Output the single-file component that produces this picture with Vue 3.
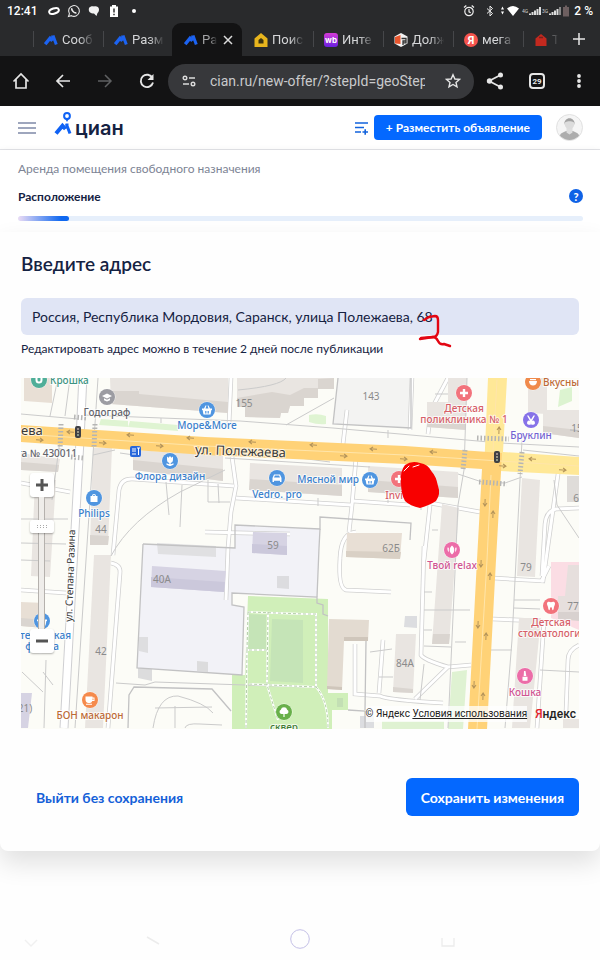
<script setup>
import { ref } from 'vue'

const address = ref('Россия, Республика Мордовия, Саранск, улица Полежаева, 68')
const zoom = ref(81)
const progress = 9

const tabs = [
  { id: 1, title: 'Сооб', icon: 'cian' },
  { id: 2, title: 'Разм', icon: 'cian' },
  { id: 3, title: 'Ра', icon: 'cian', active: true },
  { id: 4, title: 'Поис', icon: 'home' },
  { id: 5, title: 'Инте', icon: 'wb' },
  { id: 6, title: 'Долж', icon: 'cube' },
  { id: 7, title: 'мега', icon: 'ya' },
]

const shade = '#dad5d0'
const gray = '#e9e5e1'
const beige = '#e8dfd5'
const violet = '#d6d3e3'
const buildings = [
  { p: '24,378 52,378 52,403 24,401', f: beige },
  { p: '110,378 228,378 228,413 111,404', f: gray },
  { p: '111,391 139,391 139,394 228,402 228,413 111,404', f: shade },
  { p: '237,378 334,378 334,389 318,389 318,398 304,398 304,406 290,406 288,413 281,413 280,418 245,417 245,407 237,407', f: gray },
  { p: '237,398 272,392 290,395 304,388 318,388 318,379 334,378 334,389 318,389 318,398 304,398 304,406 290,406 288,413 281,413 280,418 245,417 245,407 237,407', f: shade },
  { p: '448,378 467,378 466,430 427,427 427,402 448,402', f: gray },
  { p: '427,418 466,421 466,430 427,427', f: shade },
  { p: '528,378 547,378 547,414 528,413', f: gray },
  { p: '543,410 579,410 579,438 543,433', f: gray },
  { p: '543,426 579,430 579,438 543,433', f: shade },
  { p: '21,453 60,459 58,472 21,470', f: gray },
  { p: '21,462 59,465 58,472 21,470', f: shade },
  { p: '93,448 112,448 108,545 90,545', f: gray },
  { p: '90,535 109,536 108,545 90,545', f: shade },
  { p: '94,555 111,555 103,728 85,728', f: gray },
  { p: '133,450 223,455 223,481 133,470', f: gray },
  { p: '133,460 223,469 223,481 133,470', f: shade },
  { p: '250,463 342,468 342,496 249,490', f: gray },
  { p: '250,479 342,485 342,496 249,490', f: shade },
  { p: '368,466 458,472 458,498 368,492', f: gray },
  { p: '368,480 458,487 458,498 368,492', f: shade },
  { p: '35,480 56,480 50,577 31,576', f: gray },
  { p: '21,602 45,603 44,628 21,626', f: beige },
  { p: '21,618 45,620 44,628 21,626', f: shade },
  { p: '21,693 32,693 28,728 21,728', f: violet },
  { p: '253,532 287,533 287,555 252,553', f: violet },
  { p: '252,544 287,546 287,555 252,553', f: '#cbc8db' },
  { p: '347,533 402,533 400,559 346,557', f: beige },
  { p: '346,551 401,552 400,559 346,557', f: '#d9d0c5' },
  { p: '152,566 226,571 224,592 151,587', f: violet },
  { p: '151,577 225,582 224,592 151,587', f: '#cbc8db' },
  { p: '157,543 216,546 216,557 158,554', f: '#e0e0e2' },
  { p: '139,637 148,637 148,653 139,651', f: '#dedee0' },
  { p: '138,668 152,669 152,681 138,678', f: '#dcdcdd' },
  { p: '197,661 208,662 208,672 197,671', f: '#dcdcdd' },
  { p: '277,576 289,576 289,589 277,588', f: '#dcdcdf' },
  { p: '405,616 417,616 417,628 404,627', f: '#dcdde0' },
  { p: '396,634 416,634 413,693 393,692', f: gray },
  { p: '393,687 413,689 413,693 393,692', f: shade },
  { p: '442,504 459,508 449,644 432,644', f: gray },
  { p: '433,634 450,634 449,644 432,644', f: shade },
  { p: '522,478 540,480 535,577 517,576', f: gray },
  { p: '567,476 579,476 579,502 567,502', f: '#dfdcd9' },
  { p: '519,618 541,618 530,728 512,728', f: gray },
  { p: '329,619 369,620 368,641 344,641 342,690 327,689', f: '#e3dbd1' },
  { p: '344,637 368,637 368,641 344,641', f: '#cfc6bb' },
  { p: '327,686 342,687 342,690 327,689', f: '#cfc6bb' },
  { p: '551,562 579,562 579,630 551,618', f: '#fbdde4' },
  { p: '568,565 579,565 579,612 558,612 558,596 565,596', f: '#e6dfdd' },
  { p: '558,612 579,612 579,621 558,619', f: '#d8d1cf' },
  { p: '337,698 343,698 343,707 337,707', f: '#c3dfb4' },
  { p: '360,716 374,716 374,728 360,728', f: '#dcdde0' },
  { p: '563,719 579,719 579,728 563,728', f: gray },
]

const lanes = [
  'M206 378 L205 378 M231 378 L229 424 M232 457 L236 486 L231 512 L228 548 L226 600',
  'M347 410 L343 444 M356 458 L352 505 L349 532',
  'M21 483 L70 492 M21 590 L66 593',
  'M111 563 Q121 565 120 573 L108 728',
  'M113 555 L119 490 Q121 478 133 479 L234 486',
  'M236 498 L351 505 M353 501 L410 505',
  'M205 532 L290 534',
  'M340 558 Q341 533 356 532 M340 558 Q338 588 346 590 L391 592',
  'M424 546 L421 655 Q424 660 448 667 L471 665 M448 667 L415 699',
  'M355 644 L355 694 L380 696 Q388 700 443 703 M383 640 L379 693',
  'M493 578 L543 581 L560 460 M493 619 L541 621',
  'M579 508 L556 509 Q546 511 545 524 L542 576',
  'M549 566 L541 582 M537 728 L544 620 M579 645 Q568 650 568 660 L566 712',
  'M428 434 L431 410 L448 378 M412 376 L410 430',
  'M430 503 L480 512 M430 505 L424 560',
]

const outlines = [
  'M338 378 L333 424 L411 428 L411 378',
  'M143 544 L137 668 L242 675 L244 607 L232 605 L232 593 L317 597 L317 603 L323 605 L323 614 L328 616',
  'M143 544 L235 548 L235 525 L320 529 L320 517 L411 523 L410 540',
  'M128 728 L129 695 L134 687 L212 689 L231 711',
  'M366 641 L365 710 M348 710 L365 711 L365 728 M570 430 L579 431',
  'M317 597 L319 548 L320 529',
]

const thin = [
  'M21 414 L78 419 M84 415 L240 421 L333 428 L500 443 L579 447',
  'M58 378 L50 416 M70 378 L65 416 M98 378 L92 470 L86 560 L75 728',
  'M60 440 L52 500 M21 519 L68 519 M21 543 L66 544',
  'M225 470 L180 492 Q130 520 111 556 M166 482 L169 515 M182 485 L180 527 M208 480 L208 502 L230 502 M218 484 L219 503',
  'M286 425 L334 398 M238 390 Q280 386 286 378',
  'M467 378 L464 470 L458 505 L448 728',
  'M522 440 L516 560 L512 640 L505 728',
  'M458 474 L482 482 L505 483 L522 477 M554 480 L557 505 L579 538 M523 450 L579 456',
  'M300 458 L330 462 M115 450 L93 455 M120 453 L134 455 M225 458 L370 467',
  'M116 683 L145 685 L155 682 L245 685 L305 687',
  'M153 728 Q158 695 178 696 Q205 703 213 713 M175 706 L175 728 M155 708 L212 707',
  'M185 728 Q186 723 200 724 L222 725',
  'M22 672 L43 692 M43 672 L53 685 M46 660 L44 728 M21 560 L50 561',
  'M424 592 L432 592 M424 610 L470 610 M424 630 L432 630 M424 646 L451 647 M490 650 L512 650 M370 652 L392 649 M379 677 L393 677 M514 600 L540 600 M514 608 L540 609 M540 670 L579 672 M455 642 L466 642',
  'M318 498 L318 506 M388 498 L388 503 M421 500 L421 510 M430 480 L430 503 M438 530 L432 530 M435 394 L448 394',
  'M349 460 L349 455 M388 430 L388 438 M161 423 L161 418 M424 664 L420 700',
]

const paths = [
  'M248 612 L305 614 L316 614 L316 687 L270 685 L249 684',
  'M248 612 L247 650 L268 650 M268 612 L267 685 L278 720 M247 650 L246 728',
  'M316 687 Q328 700 328 728',
]

const crossings = [
  'M61 424 L60 450', 'M95 424 L94 448', 'M74 417 L86 418', 'M71 457 L83 458',
  'M477 438 L509 439', 'M479 482 L507 484', 'M465 450 L463 470', 'M522 452 L520 474',
]

const arrows = [
  [70, 432, 183], [40, 440, 3], [103, 443, 3], [130, 435, 183], [160, 446, 3], [190, 438, 183],
  [252, 442, 183], [313, 445, 183], [344, 456, 3], [373, 449, 183], [404, 459, 3], [433, 452, 183],
  [503, 466, 3], [532, 459, 183], [563, 470, 3], [499, 430, 272], [485, 503, 92], [493, 514, 272],
  [481, 564, 92], [490, 576, 272], [478, 625, 92], [486, 636, 272], [474, 685, 92], [483, 696, 272],
]

const pois = [
  { x: 39, y: 380, c: '#4fae98', g: 'drop' },
  { x: 107, y: 397, c: '#9c9ca2', g: 'cap' },
  { x: 207, y: 410, c: '#4f95e0', g: 'basket' },
  { x: 170, y: 461, c: '#4f95e0', g: 'tulip' },
  { x: 94, y: 498, c: '#4f95e0', g: 'bag' },
  { x: 277, y: 478, c: '#4f95e0', g: 'car' },
  { x: 370, y: 480, c: '#4f95e0', g: 'basket' },
  { x: 399, y: 479, c: '#f2737c', g: 'cross' },
  { x: 464, y: 393, c: '#f2737c', g: 'cross' },
  { x: 531, y: 420, c: '#8672e8', g: 'scissors' },
  { x: 533, y: 382, c: '#f08a4b', g: 'food' },
  { x: 452, y: 550, c: '#ec6da8', g: 'lotus' },
  { x: 551, y: 606, c: '#f2737c', g: 'tooth' },
  { x: 525, y: 676, c: '#ec6da8', g: 'polish' },
  { x: 90, y: 700, c: '#f58a4c', g: 'cup' },
  { x: 42, y: 621, c: '#4f95e0', g: 'basket' },
  { x: 284, y: 712, c: '#68b04a', g: 'tree' },
]

const glyphs = {
  drop: 'M-3.500 -3v3a3.500 3.500 0 0 0 7 0v-3h-2v3a1.500 1.500 0 0 1-3 0v-3z',
  cap: 'M-5 -1 L0 -3.500 L5 -1 L0 1.500z M-3 1.200v2L0 4.500L3 3.200v-2L0 2.700z',
  basket: 'M-5 -1.500h2l1.500-3h1l-1 3h3l-1-3h1l1.500 3h2v1.500h-.6l-.9 4.500h-7l-.9-4.500h-.6z M-2 1v2.500h.8V1z M-.4 1v2.500h.8V1z M1.200 1v2.500h.8V1z',
  tulip: 'M-3 -4.500l1.500 1.200L0 -5l1.500 1.700L3 -4.500v3.500a3 3 0 0 1-2.300 2.900v1.300l2.800-1v1.500L.5 5h-1l-3-1.300v-1.500l2.800 1v-1.300A3 3 0 0 1-3-1z',
  bag: 'M-3.500 -2h1.500a2 2 0 0 1 4 0h1.500v6h-7z M-1 -2h2a1 1 0 0 0-2 0z',
  car: 'M-4.500 0l1.500-3.500h6L4.500 0v4h-1.500v-1.200h-6v1.200h-1.500z M-3 -.5h6l-.9-2h-4.200z',
  cross: 'M-1.200 -4h2.400v2.800h2.800v2.400h-2.800v2.800h-2.400v-2.800h-2.800v-2.400h2.800z',
  scissors: 'M-4 -4.500h1.500L0 -.5l2.500-4h1.500L1 1a2 2 0 1 1-1 1.200A2 2 0 1 1-1 1z',
  food: 'M-4 -1h8c0 3-2 4.500-4 4.500S-4 2-4-1z M-3 -3h6v1.200h-6z',
  lotus: 'M-4.500 -2.500l1.300 .3v4.500C-4.300 1.200-4.700-.5-4.500-2.500z M4.500 -2.500l-1.300 .3v4.500C4.300 1.200 4.700-.5 4.500-2.500z M0 -4.500C3 -2 3 2 0 4.500 -3 2 -3 -2 0 -4.500z',
  tooth: 'M-4 -2.500c0-2.200 2.500-2 4-1.200 1.500-.8 4-1 4 1.200 0 2-1 2.500-1.200 4.500C2.600 4.500 1.200 5 1 2.500 .9.800-.9.800-1 2.500-1.200 5-2.600 4.500-2.800 2-3 0-4-.5-4-2.500z',
  polish: 'M-1 -5h1.500l.8 5h-2.600z M-2.500 .7h5v4h-5z',
  cup: 'M-4.500 -3.500h7v1h2v3.500h-2.200c-.5 1.300-1.300 2-2.300 2h-1.500c-1.800 0-3-1.500-3-3.500z M2.500 -1.500v1.500h1v-1.500z M-4 3.700h6v1h-6z',
  tree: 'M-.6 5v-3h-1.800a2.200 2.200 0 0 1-.8-4.200 3.300 3.300 0 0 1 6.400 0A2.200 2.200 0 0 1 2.400 2h-1.800v3z',
}

const labels = [
  { t: 'Крошка', x: 50, y: 384, c: 'green', a: 'start' },
  { t: 'Годограф', x: 107, y: 416, c: 'slate' },
  { t: 'Море&More', x: 207, y: 429, c: 'blue' },
  { t: 'Флора дизайн', x: 170, y: 480, c: 'blue' },
  { t: 'Philips', x: 94, y: 517, c: 'blue' },
  { t: 'Vedro. pro', x: 277, y: 498, c: 'blue' },
  { t: 'Мясной мир', x: 359, y: 483, c: 'blue', a: 'end' },
  { t: 'Invitro', x: 401, y: 499, c: 'red' },
  { t: 'Детская', x: 464, y: 412, c: 'red' },
  { t: 'поликлиника № 1', x: 464, y: 423, c: 'red' },
  { t: 'Бруклин', x: 531, y: 439, c: 'purple' },
  { t: 'Вкусны', x: 543, y: 386, c: 'orange', a: 'start' },
  { t: 'Твой relax', x: 452, y: 569, c: 'pink' },
  { t: 'Детская', x: 551, y: 626, c: 'red' },
  { t: 'стоматологи', x: 518, y: 637, c: 'red', a: 'start' },
  { t: 'Кошка', x: 525, y: 696, c: 'pink' },
  { t: 'БОН макарон', x: 90, y: 719, c: 'brown' },
  { t: 'теринская', x: 71, y: 639, c: 'blue', a: 'end' },
  { t: 'фирма', x: 42, y: 650, c: 'blue' },
  { t: 'сквер', x: 284, y: 731, c: 'park' },
  { t: 'та № 430011', x: 77, y: 457, c: 'slate', a: 'end' },
  { t: '155', x: 244, y: 407, c: 'num' },
  { t: '143', x: 371, y: 400, c: 'num' },
  { t: '15', x: 577, y: 432, c: 'num' },
  { t: '44', x: 101, y: 533, c: 'num' },
  { t: '59', x: 273, y: 549, c: 'num' },
  { t: '62Б', x: 391, y: 552, c: 'num' },
  { t: '40А', x: 162, y: 583, c: 'num' },
  { t: '42', x: 101, y: 655, c: 'num' },
  { t: '84А', x: 405, y: 667, c: 'num' },
  { t: '79', x: 526, y: 571, c: 'num' },
  { t: '77', x: 573, y: 610, c: 'num' },
  { t: '6', x: 576, y: 502, c: 'num' },
  { t: '21)', x: 25, y: 712, c: 'num' },
]
</script>

<template>
  <div class="page">
    <div class="statusbar">
      <div class="status-left">
        <span class="clock">12:41</span>
        <svg width="14" height="14" viewBox="0 0 14 14"><ellipse cx="7" cy="7" rx="5" ry="2.600" transform="rotate(-18 7 7)" fill="none" stroke="#fff" stroke-width="2" /></svg>
        <svg width="14" height="14" viewBox="0 0 14 14" fill="none" stroke="#e8e8e8"><path d="M1.500 12.500l.9-2.700a5.400 5.400 0 1 1 2 1.900z" stroke-width="1.100" /><path d="M4.800 4.300c-.6 2 2.400 5 4.600 4.600" stroke-width="1.700" /></svg>
        <svg width="14" height="14" viewBox="0 0 14 14" fill="#f1f1f1"><path d="M2 4C3 2 6 2 7 2.500c2-.5 5 0 5 3 0 2-.7 3-1.500 3.500L9.500 12 7 9.500C3.500 9.500 1 8 2 4z" /></svg>
        <svg width="14" height="14" viewBox="0 0 14 14"><path d="M5 1h4v1.500h2V13H3V2.500h2z" fill="#fff" /><path d="M7 4.500v4M7 9.700v1.500" stroke="#222" stroke-width="1.400" /></svg>
        <svg width="14" height="14" viewBox="0 0 14 14"><circle cx="7" cy="7" r="2" fill="#fff" /></svg>
      </div>
      <div class="status-right">
        <svg width="12" height="14" viewBox="0 0 12 14" fill="none" stroke="#eee" stroke-width="1.200"><circle cx="6" cy="7.500" r="4.200" /><path d="M6 5v2.800l1.700 1M1 3.500L3.300 1.500M11 3.500L8.700 1.500" /></svg>
        <svg class="bt" width="10" height="14" viewBox="0 0 10 14" fill="none" stroke="#eee"><path d="M2 4.500l5.500 5L5 12V2l2.500 2.500-5.500 5" /></svg>
        <svg class="wifi" width="19" height="14" viewBox="0 0 19 14" fill="#fff"><path d="M0 5.500l1.500-3 1.500 3zM0 7.500l1.500 3 1.500-3zM6 4.500Q12-.5 18 4.500L12 12z" /></svg>
        <svg width="20" height="14" viewBox="0 0 20 14"><text x="0" y="9" class="net">4G</text><path d="M8 11v-1.500M10.500 11V8M13 11V6.500M15.500 11V5M18 11V3" stroke="#ddd" stroke-width="2" /></svg>
        <svg width="20" height="14" viewBox="0 0 20 14"><text x="0" y="9" class="net">3G</text><path d="M8 11v-1.500M10.500 11V8M13 11V6.500M15.500 11V5" stroke="#ddd" stroke-width="2" /><path d="M18 11V3" stroke="#8a8a8a" stroke-width="2" /></svg>
        <svg class="cell" width="8" height="14" viewBox="0 0 8 14"><path d="M3 1.500h2V3h2v9.500H1V3h2z" fill="#6d5f60" /></svg>
        <span class="clock">2 %</span>
      </div>
    </div>

    <nav class="tabs" aria-label="Вкладки">
      <div class="tab-ghost"></div>
      <div v-for="tab in tabs" :key="tab.id" class="tab" :class="{ active: tab.active, plain: tab.id === 4 }">
        <svg v-if="tab.icon === 'cian'" width="14" height="14" viewBox="0 0 14 14" fill="none" stroke="#1c63f2"><path d="M1.200 11.200L6 5.200l2.500 2.600" stroke-width="3.400" /><path d="M9 2.500L12.300 11.500M8.700 2.500V7.500" stroke-width="3" /></svg>
        <svg v-else-if="tab.icon === 'home'" width="14" height="14" viewBox="0 0 14 14"><path d="M7 0l6.500 5.500V14H.5V5.500z" fill="#e8b51d" /><path d="M4.500 10.500V7L7 5l2.500 2v3.500z" fill="#3c3410" /></svg>
        <svg v-else-if="tab.icon === 'wb'" width="14" height="14" viewBox="0 0 14 14"><defs><linearGradient id="wbg" x1="0" y1="0" x2="0" y2="1"><stop offset="0" stop-color="#d43bd6" /><stop offset="1" stop-color="#6a1fe0" /></linearGradient></defs><rect width="14" height="14" rx="3" fill="url(#wbg)" /><text x="7" y="10" text-anchor="middle" class="fav-wb">wb</text></svg>
        <svg v-else-if="tab.icon === 'cube'" width="14" height="14" viewBox="0 0 14 14"><path d="M7 0l6.500 3.500v7L7 14 .5 10.500v-7z" fill="#f3f3f3" /><path d="M1 4l5.500-2v9L1 10.500z" fill="#e8552d" /><path d="M7.500 5.500h4.500v2.500H9v4M9 9.800h3V6" stroke="#333" stroke-width="1.300" fill="none" /></svg>
        <svg v-else width="14" height="14" viewBox="0 0 14 14"><circle cx="7" cy="7" r="7" fill="#f5544d" /><text x="7" y="11" text-anchor="middle" class="fav-ya">Я</text></svg>
        <span class="tab-title">{{ tab.title }}</span>
        <button v-if="tab.active" class="tab-close" aria-label="Закрыть"><svg width="12" height="12" viewBox="0 0 12 12" stroke="#dcdcdc" stroke-width="1.500"><path d="M2 2l8 8M10 2l-8 8" /></svg></button>
      </div>
      <div class="tab last">
        <svg width="14" height="14" viewBox="0 0 14 14"><path d="M7 1l5.500 4.500V13H1.500V5.500z" fill="#c3291f" /><path d="M5 4.500h4" stroke="#74231e" stroke-width="1.500" /></svg>
        <span class="tab-title">T</span>
      </div>
      <button class="tab-new" aria-label="Новая вкладка"><svg width="14" height="14" viewBox="0 0 14 14" stroke="#e6e6e6" stroke-width="1.500"><path d="M7 1v12M1 7h12" /></svg></button>
    </nav>

    <div class="toolbar">
      <button class="tool" aria-label="Домой"><svg width="18" height="18" viewBox="0 0 18 18" fill="none" stroke="#e6e6e6" stroke-width="1.700"><path d="M1.500 9.500L9 2l7.500 7.500M4 7.500V16h10V7.500" /></svg></button>
      <button class="tool" aria-label="Назад"><svg width="16" height="16" viewBox="0 0 16 16" fill="none" stroke="#e6e6e6" stroke-width="1.700"><path d="M15 8H2M8 2L2 8l6 6" /></svg></button>
      <button class="tool" aria-label="Вперёд"><svg width="16" height="16" viewBox="0 0 16 16" fill="none" stroke="#5f6062" stroke-width="1.500"><path d="M1 8h13M8 2l6 6-6 6" /></svg></button>
      <button class="tool" aria-label="Обновить"><svg width="16" height="16" viewBox="0 0 16 16" fill="none" stroke="#e6e6e6" stroke-width="1.900"><path d="M13.500 5A6.200 6.200 0 1 0 14 9.500" /><path d="M14.500 1v6h-6z" fill="#e6e6e6" stroke="none" /></svg></button>
      <div class="urlbar">
        <svg class="tune" width="14" height="14" viewBox="0 0 14 14" fill="none" stroke="#dcdcdc" stroke-width="1.400"><circle cx="3" cy="4" r="1.800" /><path d="M7 4h6M1 10h6" /><circle cx="11" cy="10" r="1.800" /></svg>
        <input class="url" type="text" aria-label="Адресная строка" value="cian.ru/new-offer/?stepId=geoStep" />
        <button class="star" aria-label="В закладки"><svg width="16" height="16" viewBox="0 0 16 16" fill="none" stroke="#e6e6e6" stroke-width="1.400"><path d="M8 1.800l1.900 4.200 4.500.4-3.400 3 1 4.500L8 11.500l-4 2.400 1-4.500-3.400-3 4.500-.4z" /></svg></button>
      </div>
      <button class="tool" aria-label="Поделиться"><svg width="18" height="18" viewBox="0 0 18 18" fill="#e6e6e6"><path d="M14.500 3L3 9l11.500 6" fill="none" stroke="#e6e6e6" stroke-width="1.700" /><circle cx="14.500" cy="3" r="2.500" /><circle cx="3.500" cy="9" r="2.700" /><circle cx="14.500" cy="15" r="2.500" /></svg></button>
      <button class="tool" aria-label="Вкладки"><span class="count">29</span></button>
      <button class="tool" aria-label="Меню"><svg width="4" height="14" viewBox="0 0 4 14" fill="#e6e6e6"><circle cx="2" cy="2" r="1.900" /><circle cx="2" cy="7" r="1.900" /><circle cx="2" cy="12" r="1.900" /></svg></button>
    </div>

    <header class="site-header">
      <button class="burger" aria-label="Меню сайта"><svg width="18" height="14" viewBox="0 0 18 14" stroke="#7f89a8" stroke-width="1.600"><path d="M0 2h18M0 7h18M0 12h18" /></svg></button>
      <a class="logo" href="#">
        <svg width="18" height="26" viewBox="0 0 18 26" fill="none" stroke="#0f62f5"><circle cx="13" cy="5" r="2.900" stroke-width="2" /><path d="M11 7.500h4L13 11z" fill="#0f62f5" stroke="none" /><path d="M2 22.500L8.500 14.800l3 3.200" stroke-width="4" /><path d="M12.300 13l3.700 9.500M13 12.500v5" stroke-width="3" /></svg>
        <span>циан</span>
      </a>
      <button class="compare" aria-label="Сравнение"><svg width="15" height="14" viewBox="0 0 15 14" stroke="#1263dd" stroke-width="1.600" fill="none"><path d="M1 2h13M1 6.500h9M1 11h6M8.500 11h5.500M11.200 8.300v5.400" /></svg></button>
      <button class="place">+ Разместить объявление</button>
      <button class="avatar" aria-label="Профиль"><svg width="27" height="27" viewBox="0 0 27 27"><defs><clipPath id="av"><circle cx="13.500" cy="13.500" r="12.500" /></clipPath></defs><circle cx="13.500" cy="13.500" r="13" fill="#f5f5f5" stroke="#e0e0e0" /><g clip-path="url(#av)"><path d="M3.500 22.500c1-4 4.500-4.500 7-5.500h6c2.500 1 6 1.500 7 5.500v5h-20z" fill="#adadad" /><path d="M10.500 14h6v4.500l-3 2-3-2z" fill="#dedede" /><circle cx="13.500" cy="10.500" r="4.700" fill="#dcdcdc" /><path d="M8.300 11c-.8-9 11.200-9 10.400 0-.5-3-1.700-3.800-5.200-3.800S8.800 8 8.300 11z" fill="#a3a3a3" /></g></svg></button>
    </header>

    <section class="step">
      <p class="category">Аренда помещения свободного назначения</p>
      <div class="step-row">
        <strong>Расположение</strong>
        <button class="help" aria-label="Помощь">?</button>
      </div>
      <div class="progress"><div class="progress-fill" :style="{ width: progress + '%' }"></div></div>
    </section>

    <main class="card">
      <h1><label for="address">Введите адрес</label></h1>
      <div class="field">
        <input id="address" v-model="address" type="text" />
        <svg class="mark" width="36" height="36" viewBox="0 0 36 36" fill="none" stroke="#e30613" stroke-width="2.400" stroke-linecap="round" stroke-linejoin="round"><path d="M8 8l5-3 6-1q3 0 3 4v12q-1 5-5 5L4 27" /><path d="M5 26l12-1q3 0 5 4t6 3l6 2" /></svg>
      </div>
      <p class="hint">Редактировать адрес можно в течение 2 дней после публикации</p>

      <div class="map">
        <svg class="map-canvas" viewBox="21 378 558 351">
          <rect x="21" y="378" width="558" height="351" fill="#fcfcf7" />
          <path d="M338 378H411V428L333 424z" fill="#f3f3f2" />
          <path d="M143 544L235 548V525L320 529L317 597L232 593V605L244 607L242 675L137 668z" fill="#f2f2f7" />
          <path d="M248 596L328 599V693H348V710H332V729H232V675H245z" fill="#d0efb9" />
          <path d="M248 614L266 615V649H247zM272 619L303 620V683L270 681z" fill="#c5e4b7" />
          <path d="M452 672L467 670L463 729H448z M382 721H444V729H382z" fill="#dff2d2" />
          <path d="M101 419L128 421V427L99 425zM130 421L178 425V431L128 427zM309 415Q318 413 326 416V424Q318 425 309 422z" fill="#dff4d2" />
          <path d="M560 390L572 387V401L558 407z" fill="#dcf3d0" />
          <g fill="none" stroke="#d0d0d0" stroke-width="4.500"><path v-for="(d, i) in lanes" :key="i" :d="d" /></g>
          <g fill="none" stroke="#fff" stroke-width="3"><path v-for="(d, i) in lanes" :key="i" :d="d" /></g>
          <path d="M83 375L80 440L64 728" fill="none" stroke="#cfcfd2" stroke-width="9" />
          <path d="M83 375L80 440L64 728" fill="none" stroke="#fff" stroke-width="7" />
          <polygon v-for="(b, i) in buildings" :key="i" :points="b.p" :fill="b.f" />
          <g fill="none" stroke="#cbcbcb" stroke-width="1"><path v-for="(d, i) in thin" :key="i" :d="d" /></g>
          <g fill="none" stroke="#c2c2c3" stroke-width="1.300"><path v-for="(d, i) in outlines" :key="i" :d="d" /></g>
          <g fill="none" stroke="#fff" stroke-width="2"><path v-for="(d, i) in paths" :key="i" :d="d" /></g>
          <g fill="none" stroke="#b4cfa8" stroke-width="1" stroke-dasharray="3 2"><path v-for="(d, i) in paths" :key="i" :d="d" /></g>

          <path d="M488 378H507L503 452L579 457V475L500 471H484z" fill="#ffe897" />
          <path d="M21 425L205 437L405 446L502 453L501 472L496 560L487 729H468L477 560L482 469L405 464L205 455L21 442z" fill="#ffd277" />
          <path d="M21 434L205 446L405 455L579 466M497 380L493 450M491 475L487 560L477 729" fill="none" stroke="#ffe5aa" stroke-width="1" />
          <g fill="none" stroke="#b5b5b4" stroke-width="5" stroke-dasharray="1.500 2"><path v-for="(d, i) in crossings" :key="i" :d="d" /></g>
          <g fill="none" stroke="#b3935a" stroke-width="1"><path v-for="(a, i) in arrows" :key="i" d="M-4 0H3M0 -2L3 0L0 2" :transform="`translate(${a[0]} ${a[1]}) rotate(${a[2]})`" /></g>

          <g v-for="s in [{ x: 78, y: 432 }, { x: 497, y: 457 }]" :key="s.x" :transform="`translate(${s.x} ${s.y})`">
            <rect x="-3" y="-6" width="6" height="12" rx="2" fill="#3f4044" /><circle cy="-3" r="1" fill="#b9a59e" /><circle r="1" fill="#b9b59e" /><circle cy="3" r="1" fill="#a3b59e" />
          </g>
          <g transform="translate(135 451)"><rect x="-5" y="-5" width="11" height="11" rx="2" fill="#2867db" /><path d="M-3 -2H1M-3 0H1M-3 3H1M2 -3H5M3.500 -3V4" stroke="#fff" stroke-width="1" fill="none" /></g>

          <text v-for="(l, i) in labels" :key="i" :x="l.x" :y="l.y" :text-anchor="l.a || 'middle'" class="lbl" :class="l.c">{{ l.t }}</text>
          <text x="21" y="435" class="street">ева</text>
          <text transform="translate(195 454) rotate(2)" class="street">ул. Полежаева</text>
          <text transform="translate(72 622) rotate(-88)" class="street small">ул. Степана Разина</text>

          <g v-for="(p, i) in pois" :key="i" :transform="`translate(${p.x} ${p.y})`">
            <circle r="8.500" fill="#fff" opacity=".7" /><circle r="8" :fill="p.c" /><path :d="glyphs[p.g]" fill="#fff" fill-rule="evenodd" />
          </g>
          <path d="M405 465Q412 460 420 463Q428 464 432 472Q436 476 438 486Q441 494 436 501Q430 505 420 508Q410 506 405 501Q401 494 401 482Q400 471 405 465z" fill="#f80000" />
          <path d="M404 471L409 466M413 467L419 465" stroke="#fff" stroke-width="1" stroke-linecap="round" />
        </svg>

        <div class="zoom">
          <button aria-label="Приблизить"><svg width="12" height="12" viewBox="0 0 12 12" stroke="#555" stroke-width="3"><path d="M6 0v12M0 6h12" /></svg></button>
          <input v-model="zoom" type="range" min="0" max="100" aria-label="Масштаб" />
          <button aria-label="Отдалить"><svg width="12" height="12" viewBox="0 0 12 12" stroke="#555" stroke-width="3"><path d="M0 6h12" /></svg></button>
        </div>
        <div class="copyright">
          <span class="terms">© Яндекс <a href="#">Условия использования</a></span>
          <a class="yandex" href="#"><span>Я</span>ндекс</a>
        </div>
      </div>

      <div class="actions">
        <a class="exit" href="#">Выйти без сохранения</a>
        <button class="save">Сохранить изменения</button>
      </div>
    </main>

    <div class="sysnav">
      <svg width="18" height="18" viewBox="0 0 18 18" fill="none" stroke="#f0f0f0" stroke-width="1.500"><path d="M3 10l6 6 6-6" /></svg>
      <svg width="18" height="18" viewBox="0 0 18 18" fill="none" stroke="#ececec" stroke-width="1.500"><path d="M3 7l12 7" /></svg>
      <svg width="20" height="20" viewBox="0 0 20 20" fill="none" stroke="#c3bfe6"><circle cx="10" cy="10" r="9.300" /></svg>
      <svg width="18" height="18" viewBox="0 0 18 18" fill="none" stroke="#ececec" stroke-width="1.300"><path d="M3 8v8h12V8" /></svg>
    </div>
  </div>
</template>

<style>
body { background: #fefefe; }
</style>

<style scoped>
* { box-sizing: border-box; }
.page { font-family: Lato, "Open Sans", sans-serif; color: #152242; overflow: hidden; }
button { border: 0; padding: 0; background: none; font: inherit; cursor: pointer; display: flex; align-items: center; justify-content: center; }
svg { display: block; flex: none; }

.statusbar { display: flex; justify-content: space-between; align-items: center; height: 22px; padding: 0 7px; background: #292a2c; color: #fff; font: 500 12px Roboto, sans-serif; }
.status-left { display: flex; align-items: center; gap: 6px; }
.status-right { display: flex; align-items: center; }
.status-left .clock { margin-right: 4px; }
.cell { margin-right: 4px; }
.bt { margin: 0 6px 0 10px; }
.wifi { margin-right: 2px; }
.net { font: 5px Roboto, sans-serif; fill: #ccc; }

.tabs { display: grid; grid-template-columns: 32px repeat(7, 70px) 1fr 42px; height: 34px; background: #292a2c; font-family: Roboto, sans-serif; font-size: 13px; color: #d5d6d8; }
.tab { display: flex; align-items: center; gap: 4px; padding-left: 11px; margin: 1px 0 0; border-left: 1px solid transparent; min-width: 0; background: linear-gradient(#46474a, #46474a) no-repeat 0 8px / 1px 16px; }
.tab.plain { background: none; }
.tab-title { flex: 1; min-width: 0; overflow: hidden; margin-right: 6px; white-space: nowrap; -webkit-mask-image: linear-gradient(90deg, #000 50%, transparent 95%); mask-image: linear-gradient(90deg, #000 50%, transparent 95%); }
.tab.active { background: #131314; border-radius: 9px 9px 0 0; color: #a3a4a6; }
.tab.active .tab-title { margin-right: 0; }
.tab-close { margin-right: 8px; }
.tab.last { padding-right: 0; }
.tab.last .tab-title { margin: 0; opacity: .3; }
.fav-wb { font: 700 8px Inter, sans-serif; fill: #fff; }
.fav-ya { font: 700 11px Roboto, sans-serif; fill: #fff; }

.toolbar { display: flex; align-items: center; height: 50px; background: #131314; }
.tool { width: 42px; height: 42px; flex: none; }
.urlbar { flex: 1; min-width: 0; display: flex; align-items: center; height: 35px; border-radius: 18px; background: #37383b; padding: 0 13px 0 14px; }
.url { flex: 1; min-width: 0; margin: 0 20px 0 14px; padding: 0; border: 0; outline: 0; background: none; color: #c9cacc; font: 14px Roboto, sans-serif; }
.count { display: flex; align-items: center; justify-content: center; width: 16px; height: 16px; border: 2px solid #e6e6e6; border-radius: 4px; color: #e6e6e6; font: 700 8px Roboto, sans-serif; }

.site-header { display: flex; align-items: center; height: 44px; padding: 0 17px 0 18px; background: #fff; border-bottom: 1px solid #e3e4e8; }
.logo { display: flex; align-items: center; gap: 3px; margin: 0 auto 0 18px; color: #152242; text-decoration: none; font: 600 20px/26px Inter, sans-serif; }
.logo svg { margin-bottom: 7px; }
.compare { margin-right: 5px; }
.place { height: 25px; padding: 0 12px; border-radius: 4px; background: #0468ff; color: #fff; font-size: 12px; font-weight: 700; white-space: nowrap; }
.avatar { margin-left: 14px; }

.step { padding: 11px 17px 11px 18px; background: #fff; box-shadow: 0 2px 8px rgba(0, 0, 0, .09); }
.category { margin: 0; font-size: 12px; line-height: 16px; color: #7d8495; }
.step-row { display: flex; align-items: center; justify-content: space-between; height: 16px; margin: 11px 0 12px; font-size: 12px; }
.step-row strong { font-weight: 700; }
.help { width: 14px; height: 14px; border-radius: 50%; background: #0f62e6; color: #fff; font-size: 11px; font-weight: 900; }
.progress { height: 5px; border-radius: 3px; background: #e6effb; overflow: hidden; }
.progress-fill { height: 100%; border-radius: 3px; background: linear-gradient(90deg, #ecdcf5, #0f68f0 85%); }

.card { padding: 19px 21px 35px; background: #fefefe; border-radius: 0 0 8px 8px; box-shadow: 0 12px 26px rgba(0, 0, 0, .12); }
h1 { margin: 0; font-size: 19px; line-height: 26px; font-weight: 600; }
.field { position: relative; margin-top: 21px; }
.field input { display: block; width: 100%; height: 37px; padding: 0 11px; border: 0; border-radius: 6px; outline: 0; background: #e0e5f5; color: #152242; font: 14px Lato, sans-serif; }
.mark { position: absolute; left: 395px; top: 14px; }
.hint { margin: 6px 0 0; font-size: 12px; line-height: 16px; }
.map { position: relative; margin-top: 21px; }
.map-canvas { width: 100%; height: auto; }
.lbl { font: 500 10px "Noto Sans", sans-serif; paint-order: stroke; stroke: rgba(255, 255, 255, .75); stroke-width: 2px; stroke-linejoin: round; }
.blue { fill: #3a80cc; }
.green { fill: #3d9482; }
.red { fill: #d65f68; }
.pink { fill: #d05592; }
.purple { fill: #7463d2; }
.orange, .brown { fill: #bd6a36; }
.slate { fill: #63646b; }
.park { fill: #3f7a35; }
.num { fill: #8b8b8b; stroke: none; font-weight: 400; }
.street { font: 13px "Noto Sans", sans-serif; fill: #3a3a3a; paint-order: stroke; stroke: rgba(255, 255, 255, .7); stroke-width: 2px; }
.street.small { font-size: 10px; }

.zoom { position: absolute; left: 9px; top: 95px; display: flex; flex-direction: column; align-items: center; }
.zoom button { width: 24px; height: 24px; background: #fff; border-radius: 3px; box-shadow: 0 1px 2px rgba(0, 0, 0, .3); }
.zoom input { writing-mode: vertical-lr; direction: rtl; appearance: none; -webkit-appearance: none; width: 24px; height: 132px; margin: 0; background: linear-gradient(90deg, transparent 8px, #b5b1ad 8px 9px, #efedea 9px 14px, #b5b1ad 14px 15px, transparent 15px); }
.zoom input::-webkit-slider-thumb { -webkit-appearance: none; width: 24px; height: 13px; border-radius: 2px; background: linear-gradient(#fff, #fff) 0 6px / 100% 1px no-repeat, repeating-linear-gradient(90deg, #aaa 0 1px, #fff 1px 3px) 7px 5px / 10px 3px no-repeat, #fff; box-shadow: 0 1px 2px rgba(0, 0, 0, .3); }
.copyright { position: absolute; right: 3px; bottom: 7px; display: flex; align-items: center; gap: 8px; color: #222; font: 10px/16px Roboto, sans-serif; }
.terms { background: rgba(255, 255, 255, .75); }
.terms a { color: inherit; }
.yandex { color: #222; font: 500 12px/16px Roboto, sans-serif; text-decoration: none; }
.yandex span { color: #e4252b; }

.actions { display: flex; align-items: center; justify-content: space-between; margin-top: 49px; }
.exit { padding-left: 15px; color: #1460d8; font-size: 14px; font-weight: 700; text-decoration: none; }
.save { height: 38px; padding: 0 15px; border-radius: 6px; background: #0468ff; color: #fff; font-size: 14px; font-weight: 700; }

.sysnav { display: grid; grid-template-columns: 61px 1fr 112px 1fr 61px; align-items: center; justify-items: center; padding: 78px 0 12px; }
</style>
